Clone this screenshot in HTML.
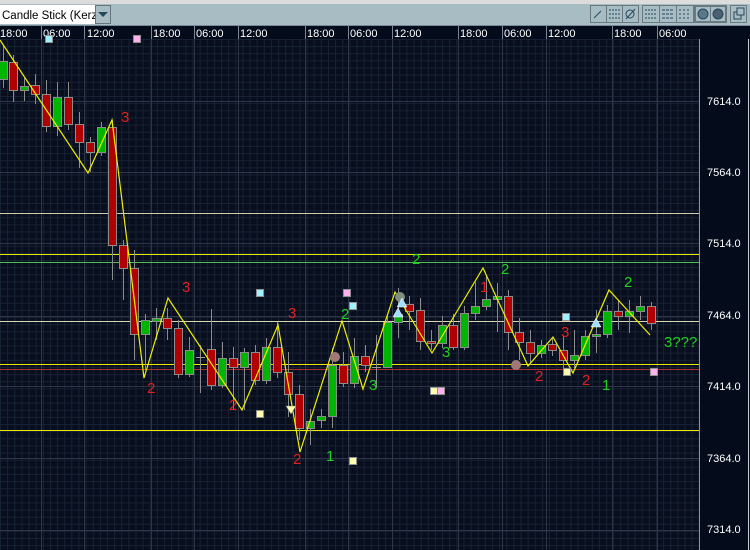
<!DOCTYPE html>
<html><head><meta charset="utf-8"><style>
html,body{margin:0;padding:0;width:750px;height:550px;overflow:hidden;background:#040b1a;font-family:"Liberation Sans",sans-serif}
svg{display:block}
</style></head><body>
<svg id="s" width="750" height="550" xmlns="http://www.w3.org/2000/svg" font-family="Liberation Sans, sans-serif">
<defs>
<pattern id="g" x="0" y="39" width="7.13" height="7.13" patternUnits="userSpaceOnUse">
<path d="M0 0.5H7.13M0.5 0V7.13" stroke="#172234" stroke-width="1"/>
</pattern>
</defs>
<rect x="0" y="0" width="750" height="550" fill="#040b1a"/>
<rect x="0" y="39" width="699" height="511" fill="#080e1d"/>
<rect x="0" y="39" width="699" height="511" fill="url(#g)"/>
<g id="grid" stroke="#2c3646" stroke-width="1"></g>
<line x1="699.5" y1="39" x2="699.5" y2="550" stroke="#8a94a4"/>
<line x1="748.5" y1="39" x2="748.5" y2="550" stroke="#c8ccd0"/>
<rect x="0" y="0" width="750" height="4" fill="#dcdcdc"/>
<rect x="0" y="4" width="750" height="21" fill="#a8bcc4"/>
<rect x="0" y="5" width="95" height="19" fill="#ffffff"/>
<text x="2" y="19" font-size="11.5" fill="#000">Candle Stick (Kerze</text>
<rect x="95.5" y="5.5" width="15" height="18" fill="#a8bcc4" stroke="#66747c"/>
<path d="M98 12H108L103 17Z" fill="#24485c"/>
<g fill="#a8bcc4" stroke="#6a7880">
<rect x="590.5" y="5.5" width="48" height="17"/>
<rect x="642.5" y="5.5" width="51" height="17"/>
<rect x="730.5" y="5.5" width="16" height="17"/>
</g>
<rect x="694" y="5" width="33" height="18" fill="#6a7880"/>
<rect x="696" y="7" width="14" height="14" fill="#a8bcc4"/>
<rect x="711" y="7" width="14" height="14" fill="#a8bcc4"/>
<g stroke="#24485c" fill="none" stroke-width="1">
<line x1="606.5" y1="6" x2="606.5" y2="22" stroke="#6a7880"/><line x1="622.5" y1="6" x2="622.5" y2="22" stroke="#6a7880"/>
<path d="M594 18L601 11"/>
<path d="M609 10H620M609 14H620M609 18H620" stroke-dasharray="2 1"/>
<circle cx="630" cy="14" r="4"/><path d="M626 19L635 9"/>
<line x1="659.5" y1="6" x2="659.5" y2="22" stroke="#6a7880"/><line x1="676.5" y1="6" x2="676.5" y2="22" stroke="#6a7880"/>
<path d="M645 10H657M645 14H657M645 18H657" stroke-dasharray="2 1"/>
<path d="M662 10H674M662 14H674M662 18H674" stroke-dasharray="3 1"/>
<path d="M679 10H691M679 14H691M679 18H691" stroke-dasharray="2 2"/>
<circle cx="703" cy="14" r="5" fill="#5a7888"/><circle cx="718" cy="14" r="5" fill="#4a6070"/>
<rect x="734" y="12" width="7" height="7"/><rect x="737" y="8" width="7" height="7" fill="#a8bcc4"/>
</g>
<rect x="0" y="25" width="750" height="14" fill="#040b1a"/>
<line x1="0" y1="25.5" x2="750" y2="25.5" stroke="#7a8898"/>
<g id="time" font-size="11" fill="#ffffff"></g>
<g font-size="11" fill="#ffffff">
<text x="707" y="105">7614.0</text><text x="707" y="176">7564.0</text><text x="707" y="247">7514.0</text>
<text x="707" y="319">7464.0</text><text x="707" y="390">7414.0</text><text x="707" y="462">7364.0</text><text x="707" y="533">7314.0</text>
</g>
<g stroke-width="1">
<line x1="0" y1="213.5" x2="699" y2="213.5" stroke="#d0d0b0"/>
<line x1="0" y1="254.5" x2="699" y2="254.5" stroke="#e8e800"/>
<line x1="0" y1="262.5" x2="699" y2="262.5" stroke="#50c050"/>
<line x1="0" y1="321.5" x2="699" y2="321.5" stroke="#d8d8b0"/>
<line x1="0" y1="364.5" x2="699" y2="364.5" stroke="#e8e800"/>
<line x1="0" y1="369.5" x2="699" y2="369.5" stroke="#b03030"/>
<line x1="0" y1="430.5" x2="699" y2="430.5" stroke="#e8e800"/>
</g>
<g id="candles"></g>
<polyline fill="none" stroke="#f0f000" stroke-width="1.2" points="0,40 88,173 112,120 144,378 168,298 242,410 278,325 300,452 342,321 363,389 395,292 432,353 483,268 528,366 553,337 573,373 609,290 650,335"/>
<g id="marks"></g>
<g font-size="15">
<g fill="#e02020">
<text x="121" y="122">3</text><text x="182" y="292">3</text><text x="147" y="393">2</text><text x="229" y="410">2</text>
<text x="288" y="318">3</text><text x="293" y="464">2</text><text x="480" y="292">1</text><text x="535" y="381">2</text>
<text x="561" y="337">3</text><text x="582" y="385">2</text>
</g>
<g fill="#20d020">
<text x="326" y="461">1</text><text x="341" y="319">2</text><text x="369" y="390">3</text><text x="412" y="264">2</text>
<text x="442" y="357">3</text><text x="501" y="274">2</text><text x="602" y="390">1</text><text x="624" y="287">2</text>
<text x="664" y="347">3???</text>
</g>
</g>
</svg>
<script>
var NS="http://www.w3.org/2000/svg";
function el(p,t,a){var e=document.createElementNS(NS,t);for(var k in a)e.setAttribute(k,a[k]);p.appendChild(e);return e;}
var grid=document.getElementById('grid');
[101,172,243,316,386,458,530].forEach(function(y){el(grid,'line',{x1:0,y1:y+.5,x2:699,y2:y+.5});});
var vx=[41,84,151,194,238,305,348,392,458,502,546,612,657];
vx.forEach(function(x){el(grid,'line',{x1:x+.5,y1:39,x2:x+.5,y2:550});});
var tm=document.getElementById('time');
var labs=[[0,'18:00'],[43,'06:00'],[87,'12:00'],[153,'18:00'],[196,'06:00'],[240,'12:00'],[307,'18:00'],[350,'06:00'],[394,'12:00'],[460,'18:00'],[504,'06:00'],[548,'12:00'],[614,'18:00'],[659,'06:00']];
labs.forEach(function(l){var t=el(tm,'text',{x:l[0],y:37});t.textContent=l[1];});
vx.forEach(function(x){el(tm,'line',{x1:x+.5,y1:26,x2:x+.5,y2:39,stroke:'#7a8898'});});
var c=[[3,61,79,'g',45,88],[13,62,90,'r',55,102],[24,86,90,'g',78,101],[35,85,94,'r',74,104],[46,94,126,'r',80,132],[57,97,126,'g',82,136],[68,97,124,'r',82,130],[79,124,142,'r',112,168],[90,142,152,'r',137,172],[101,127,152,'g',122,156],[112,127,245,'r',120,280],[123,245,268,'r',240,300],[134,268,334,'r',250,360],[145,320,334,'g',314,370],[156,318,321,'g',308,340],[167,318,328,'r',308,340],[178,328,374,'r',320,378],[189,350,374,'g',337,377],[200,357,358,'d',345,393],[211,349,385,'r',309,390],[222,358,385,'g',342,388],[233,358,367,'r',347,410],[244,352,367,'g',348,410],[255,352,380,'r',345,385],[266,347,380,'g',338,384],[277,347,372,'r',322,378],[288,372,394,'r',352,417],[299,394,428,'r',385,440],[310,421,428,'g',409,445],[321,416,420,'g',409,428],[332,365,416,'g',348,428],[343,365,383,'r',352,387],[354,356,383,'g',338,388],[365,356,365,'r',345,372],[376,367,368,'d',335,388],[387,322,367,'g',314,368],[398,314,322,'g',288,338],[409,304,311,'r',296,330],[420,310,341,'r',298,350],[431,341,343,'r',330,350],[442,325,343,'g',316,348],[453,325,347,'r',314,350],[464,313,347,'g',306,350],[475,306,313,'g',282,320],[486,299,306,'g',276,310],[497,296,299,'g',283,332],[508,296,332,'r',290,350],[519,332,342,'r',318,360],[530,342,353,'r',330,365],[541,345,353,'g',340,358],[552,344,350,'r',338,356],[563,350,360,'r',336,372],[574,355,360,'g',330,368],[585,336,355,'g',330,360],[596,334,336,'g',310,353],[607,311,334,'g',305,338],[618,311,316,'r',300,330],[629,311,316,'g',300,333],[640,306,311,'g',296,320],[651,306,323,'r',302,330]];
var cg=document.getElementById('candles');
c.forEach(function(d){
 el(cg,'line',{x1:d[0]+.5,y1:d[4],x2:d[0]+.5,y2:d[5],stroke:'#8c8c8c'});
 if(d[3]=='d'){el(cg,'line',{x1:d[0]-4,y1:d[1]+.5,x2:d[0]+5,y2:d[1]+.5,stroke:'#9a9a9a'});return;}
 el(cg,'rect',{x:d[0]-3.5,y:d[1]+.5,width:8,height:Math.max(d[2]-d[1],2),fill:d[3]=='g'?'#00b400':'#b00000',stroke:'#8c8c8c','stroke-width':1});
});
var mg=document.getElementById('marks');
[[49,39,'#a0f0ff'],[137,39,'#ffb0f0'],[260,293,'#a0f0ff'],[347,293,'#ffb0f0'],[353,306,'#a0f0ff'],[260,414,'#ffffb0'],[353,461,'#ffffb0'],[434,391,'#ffffb0'],[441,391,'#ffb0f0'],[566,317,'#a0f0ff'],[567,372,'#ffffb0'],[654,372,'#ffb0f0']].forEach(function(s){
 el(mg,'rect',{x:s[0]-3.5,y:s[1]-3.5,width:7,height:7,fill:s[2],stroke:'#909090'});});
[[335,357,'#a07878'],[400,297,'#809080'],[516,365,'#a07878']].forEach(function(s){el(mg,'circle',{cx:s[0],cy:s[1],r:5,fill:s[2]});});
[[398,313],[402,303],[596,323]].forEach(function(s){el(mg,'path',{d:'M'+(s[0]-5)+' '+(s[1]+4)+'L'+s[0]+' '+(s[1]-5)+'L'+(s[0]+5)+' '+(s[1]+4)+'Z',fill:'#a0e0ff',stroke:'#ffffff','stroke-width':.5});});
el(mg,'path',{d:'M286 406L296 406L291 414Z',fill:'#ffffb0',stroke:'#808080','stroke-width':.5});
</script>
</body></html>
